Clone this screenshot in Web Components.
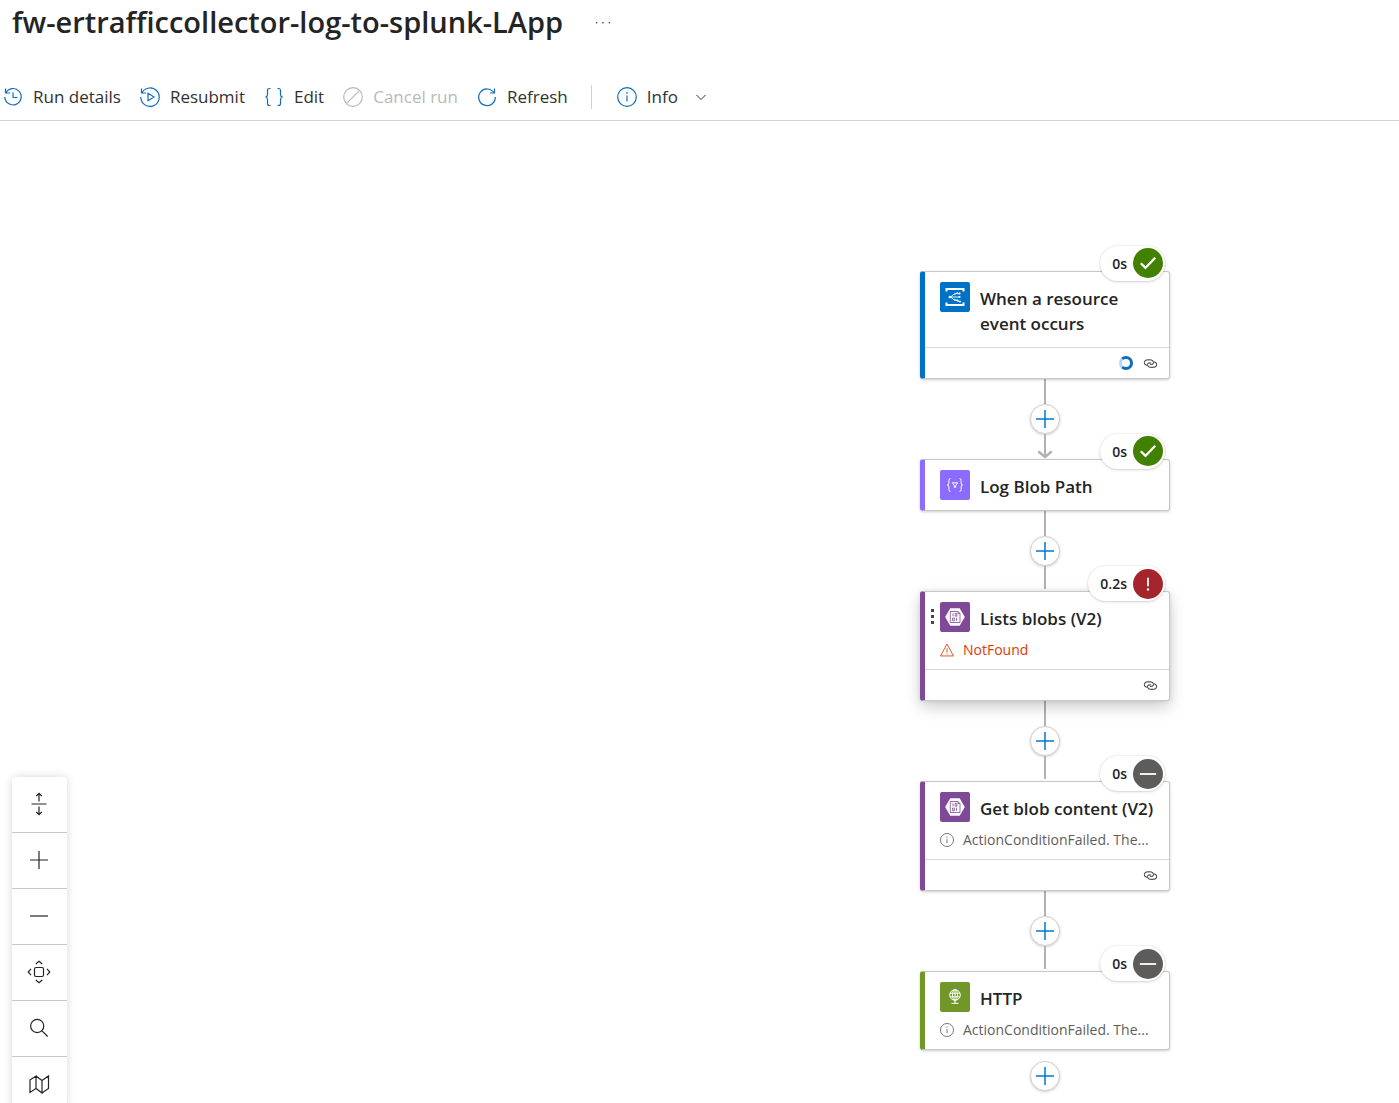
<!DOCTYPE html>
<html lang="en">
<head>
<meta charset="utf-8">
<meta name="viewport" content="width=device-width, initial-scale=1">
<title>fw-ertrafficcollector-log-to-splunk-LApp</title>
<style>
  html, body {
    height: 100%;
    margin: 0;
  }

  body {
    background: #fff;
    color: #242424;
    font-family: "Open Sans", "Noto Sans", sans-serif;
    overflow: hidden;
  }
</style>
</head>
<body>
<run-page>
  <page-title slot="header">fw-ertrafficcollector-log-to-splunk-LApp</page-title>
  <command-bar slot="header">
    <command-button icon="history">Run details</command-button>
    <command-button icon="resubmit">Resubmit</command-button>
    <command-button icon="braces">Edit</command-button>
    <command-button icon="cancel" disabled>Cancel run</command-button>
    <command-button icon="refresh">Refresh</command-button>
    <command-button icon="info" menu>Info</command-button>
  </command-bar>

  <flow-card icon="eventgrid" color="#0072c6" status="ok" time="0s" loading linked>When a resource event occurs</flow-card>
  <flow-edge arrow></flow-edge>
  <flow-card icon="compose" color="#8c6cff" status="ok" time="0s">Log Blob Path</flow-card>
  <flow-edge></flow-edge>
  <flow-card icon="blob" color="#804998" status="failed" time="0.2s" error="NotFound" linked active>Lists blobs (V2)</flow-card>
  <flow-edge></flow-edge>
  <flow-card icon="blob" color="#804998" status="skipped" time="0s" note="ActionConditionFailed. The..." linked>Get blob content (V2)</flow-card>
  <flow-edge></flow-edge>
  <flow-card icon="http" color="#709727" status="skipped" time="0s" note="ActionConditionFailed. The...">HTTP</flow-card>
  <flow-edge last></flow-edge>

  <canvas-controls slot="controls"></canvas-controls>
</run-page>

<script>
const icons = {
  history: '<path d="M2.5 1.5V6H7M2.8 5.8A8.2 8.2 0 1 1 1.8 10M10 5.5v5h4.5"/>',
  resubmit: '<path d="M1.5 1.5V6H6M2 5.6A9.2 9.2 0 1 1 .8 10M8 6.3v7.4l6-3.7z"/>',
  braces: '<path d="M6.5 1.5H5.5Q3.5 1.5 3.5 3.5V7.5Q3.5 9.5 1.5 10Q3.5 10.5 3.5 12.5V16.5Q3.5 18.5 5.5 18.5H6.5M13.5 1.5H14.5Q16.5 1.5 16.5 3.5V7.5Q16.5 9.5 18.5 10Q16.5 10.5 16.5 12.5V16.5Q16.5 18.5 14.5 18.5H13.5"/>',
  cancel: '<circle cx="10" cy="10" r="9.3"/><path d="M3.6 16.4 16.4 3.6"/>',
  refresh: '<path d="M17.5 1.5V6H13M17 5.8A8.3 8.3 0 1 0 18.3 10"/>',
  info: '<circle cx="10" cy="10" r="9.3"/><path d="M10 8.5v6M10 5v1.8"/>',
  chevron: '<path d="m1 6 9 9 9-9"/>',
  more: '<g fill="currentColor" stroke="none"><circle cx="2" cy="11" r="1"/><circle cx="10" cy="11" r="1"/><circle cx="18" cy="11" r="1"/></g>',
  plus: '<path d="M10 1v18M1 10h18"/>',
  minus: '<path d="M1 10h18"/>',
  collapse: '<path d="M2.5 10h15M10 7.5V-.5M10 12.5v8M7.3 2 10-.7 12.7 2M7.3 18l2.7 2.7 2.7-2.7"/>',
  fit: '<rect x="5.5" y="5.5" width="9" height="9" rx="1.5"/><path d="M6.8 2 10-.8 13.2 2M6.8 18l3.2 2.8 3.2-2.8M2 6.8-.8 10 2 13.2M18 6.8l2.8 3.2-2.8 3.2"/>',
  search: '<circle cx="8.2" cy="8" r="6.6"/><path d="m13 12.8 5.7 5.7"/>',
  map: '<path d="M1 6 7 2v12.5l-6 4zM7 2l6 4.5V19l-6-4.5M13 6.5 19.5 2v12.5L13 19"/>',
  link: '<path d="M4.5 12.8A4.2 4.2 0 0 1 5 4.4h5.4a4.2 4.2 0 0 1 4.2 4.2M15.5 7.4a4.2 4.2 0 0 1-.5 8.4H9.6A4.2 4.2 0 0 1 5.4 11.6M5.4 11.6Q5.4 9.2 7.6 9.2H11M14.6 8.6Q14.6 11.4 12 11.4H9.5"/>',
  warning: '<path d="M10 1.5 19.3 18.5H.7zM10 7.5v6M10 15v1.5"/>',
  ok: '<path d="m2 10.3 5.2 5.2L18 4.2" stroke-width="2.6"/>',
  failed: '<path d="M10 3v9.5" stroke-width="2"/><circle cx="10" cy="16" r="1.3" fill="currentColor" stroke="none"/>',
  skipped: '<path d="M1 10h18" stroke-width="2"/>',
  // connector glyphs, drawn for the 30px tile
  eventgrid: '<path d="M1.5 4.5V2h17v2.5M1.5 15.5V18h17v-2.5" stroke-width="2"/><path d="M5 10h9M6 9.7l3.5-3H14M6 10.3l3.5 3H12M9 8l4-3M9 12l5 2.5" stroke-width=".9"/><g fill="currentColor" stroke="none"><circle cx="4.8" cy="10" r="1.2"/><circle cx="14.5" cy="10" r="1.1"/><circle cx="14.5" cy="6.5" r="1.1"/><circle cx="12.5" cy="13.5" r="1.1"/><circle cx="15" cy="14.5" r="1"/></g>',
  compose: '<path d="M5.5 3.5Q3.9 3.5 3.9 5.5V8Q3.9 10 2.3 10Q3.9 10 3.9 12V14.5Q3.9 16.5 5.5 16.5M14.5 3.5Q16.1 3.5 16.1 5.5V8Q16.1 10 17.7 10Q16.1 10 16.1 12V14.5Q16.1 16.5 14.5 16.5M7.3 7.8h5.4L10.7 10.5V12.3H9.3V10.5z"/>',
  blob: '<path d="M5.3 1.2h9.4L19.8 10l-5.1 8.8H5.3L.2 10z" fill="currentColor" stroke="none"/><g stroke="#804998" stroke-width=".8"><path d="M5.3 4.5h7.7l2 2v9H5.3zM13 4.5v2h2"/><path d="M8 6.3v3M10.2 6.4h1.7v2.8h-1.7zM7.6 11h1.7v2.8H7.6zM11.5 10.8v3"/></g>',
  http: '<circle cx="10" cy="8" r="5.3"/><ellipse cx="10" cy="8" rx="2.4" ry="5.3"/><path d="M5 6.2h10M5 9.8h10M10 2.7V17M6.5 16.3h7"/>'
};

const makeRoot = (element, html) => {
  const template = document.createElement('template');
  template.innerHTML = html;
  element.attachShadow({ mode: 'open' });
  element.shadowRoot.appendChild(template.content.cloneNode(true));
};

class UiIcon extends HTMLElement {
  connectedCallback() {
    if (this.shadowRoot) return;
    makeRoot(this, `<style>
      :host {
        display: block;
        flex: none;
        width: 20px;
        height: 20px;
      }
      svg {
        display: block;
        width: 100%;
        height: 100%;
        overflow: visible;
        fill: none;
        stroke: currentColor;
        stroke-width: var(--stroke, 1.2);
      }
    </style>
    <svg viewBox="0 0 20 20" aria-hidden="true">${icons[this.getAttribute('name')]}</svg>`);
  }
}
customElements.define('ui-icon', UiIcon);

class RunPage extends HTMLElement {
  constructor() {
    super();
    makeRoot(this, `<style>
      :host {
        display: flex;
        flex-direction: column;
        height: 100%;
      }
      main {
        position: relative;
        flex: 1;
        min-height: 0;
        overflow: hidden;
      }
      .flow {
        display: flex;
        flex-direction: column;
        width: 250px;
        margin: 150px 229px 0 auto;
      }
    </style>
    <slot name="header"></slot>
    <main>
      <div class="flow"><slot></slot></div>
      <slot name="controls"></slot>
    </main>`);
  }
}
customElements.define('run-page', RunPage);

class PageTitle extends HTMLElement {
  constructor() {
    super();
    makeRoot(this, `<style>
      :host {
        display: flex;
        align-items: center;
        gap: 32px;
        height: 44px;
        padding: 0 12px;
      }
      h1 {
        margin: 0;
        font-size: 29px;
        font-weight: 600;
        line-height: 40px;
      }
      button {
        padding: 0;
        border: 0;
        background: none;
        color: #323130;
      }
      ui-icon {
        width: 16px;
        height: 16px;
      }
    </style>
    <h1><slot></slot></h1>
    <button aria-label="More actions"><ui-icon name="more"></ui-icon></button>`);
  }
}
customElements.define('page-title', PageTitle);

class CommandBar extends HTMLElement {
  constructor() {
    super();
    makeRoot(this, `<style>
      :host {
        display: flex;
        align-items: center;
        gap: 19px;
        height: 46px;
        padding: 30px 3px 0;
        border-bottom: 1px solid #d1d1d1;
      }
    </style>
    <slot></slot>`);
  }
}
customElements.define('command-bar', CommandBar);

class CommandButton extends HTMLElement {
  constructor() {
    super();
    const menu = this.hasAttribute('menu');
    const disabled = this.hasAttribute('disabled');
    makeRoot(this, `<style>
      :host {
        display: block;
      }
      :host([menu]) {
        margin-left: 4px;
        padding-left: 25px;
        border-left: 1px solid #d1d1d1;
      }
      button {
        display: flex;
        align-items: center;
        gap: 10px;
        height: 24px;
        padding: 0;
        border: 0;
        background: none;
        color: #323130;
        font: 500 17px/24px "Open Sans", "Noto Sans", sans-serif;
        white-space: nowrap;
      }
      button:disabled {
        color: #b9b9b9;
      }
      .icon {
        color: #0f6cbd;
      }
      button:disabled .icon {
        color: inherit;
      }
      .chevron {
        width: 10px;
        height: 10px;
        margin-left: 8px;
        --stroke: 2;
      }
    </style>
    <button${disabled ? ' disabled' : ''}>
      <ui-icon class="icon" name="${this.getAttribute('icon')}"></ui-icon>
      <slot></slot>
      ${menu ? '<ui-icon class="chevron" name="chevron"></ui-icon>' : ''}
    </button>`);
  }
}
customElements.define('command-button', CommandButton);

class StatusPill extends HTMLElement {
  connectedCallback() {
    if (this.shadowRoot) return;
    makeRoot(this, `<style>
      :host {
        display: flex;
        align-items: center;
        gap: 6px;
        height: 30px;
        padding: 3px 2px 2px 12px;
        border-radius: 18px;
        background: #fff;
        box-shadow: 0 0 2px rgba(0, 0, 0, .14), 0 1px 3px rgba(0, 0, 0, .14);
        font-size: 14px;
        font-weight: 600;
        line-height: 20px;
      }
      .dot {
        display: grid;
        place-items: center;
        width: 30px;
        height: 30px;
        border-radius: 50%;
        background: #5d5c5b;
        color: #fff;
      }
      :host([status="ok"]) .dot {
        margin-bottom: 2px;
        background: #428000;
      }
      :host([status="failed"]) .dot {
        background: #a4262c;
      }
      :host([status="ok"]) ui-icon,
      :host([status="skipped"]) ui-icon {
        width: 18px;
        height: 18px;
      }
      :host([status="failed"]) ui-icon {
        width: 18px;
        height: 18px;
      }
    </style>
    <slot></slot>
    <span class="dot"><ui-icon name="${this.getAttribute('status')}"></ui-icon></span>`);
  }
}
customElements.define('status-pill', StatusPill);

class FlowCard extends HTMLElement {
  constructor() {
    super();
    const color = this.getAttribute('color');
    const error = this.getAttribute('error');
    const note = this.getAttribute('note');
    const linked = this.hasAttribute('linked');
    const message = error || note;
    makeRoot(this, `<style>
      :host {
        display: block;
        position: relative;
        box-sizing: border-box;
        border: 1px solid #c8c8c8;
        border-left: 5px solid ${color};
        border-radius: 3px;
        background: #fff;
        box-shadow: 0 1px 3px rgba(0, 0, 0, .2);
      }
      :host([active]) {
        box-shadow: 0 6px 16px rgba(0, 0, 0, .2), 0 0 4px rgba(0, 0, 0, .1);
      }
      header {
        display: flex;
        gap: 10px;
        padding: 10px 14px 0 15px;
      }
      .tile {
        display: grid;
        flex: none;
        place-items: center;
        width: 30px;
        height: 30px;
        border-radius: 2px;
        background: ${color};
        color: #fff;
        --stroke: 1;
      }
      h2 {
        margin: 0;
        padding: 4px 0 11px;
        font-size: 17px;
        font-weight: 600;
        line-height: 25px;
      }
      .message {
        display: flex;
        align-items: center;
        gap: 9px;
        height: 16px;
        padding: 0 12px 11px 15px;
        color: ${error ? '#da3b01' : '#605e5c'};
        font-size: 14px;
        line-height: 20px;
        white-space: nowrap;
      }
      .message ui-icon {
        width: 14px;
        height: 14px;
      }
      footer {
        display: flex;
        align-items: center;
        justify-content: flex-end;
        gap: 11px;
        height: 30px;
        padding: 0 12px;
        border-top: 1px solid #d8d8d8;
      }
      footer ui-icon {
        width: 13px;
        height: 13px;
        --stroke: 1.5;
      }
      .spinner {
        box-sizing: border-box;
        width: 14px;
        height: 14px;
        border: 3px solid #0f6cbd;
        border-left-color: #b4d6fa;
        border-radius: 50%;
      }
      status-pill {
        position: absolute;
        top: -26px;
        right: 4px;
      }
      .grip {
        position: absolute;
        top: 17px;
        left: 6px;
        display: grid;
        gap: 3px;
      }
      .grip i {
        width: 3px;
        height: 3px;
        background: #484644;
      }
    </style>
    ${this.hasAttribute('active') ? '<div class="grip"><i></i><i></i><i></i></div>' : ''}
    <header>
      <div class="tile"><ui-icon name="${this.getAttribute('icon')}"></ui-icon></div>
      <h2><slot></slot></h2>
    </header>
    ${message ? `<div class="message"><ui-icon name="${error ? 'warning' : 'info'}"></ui-icon><span>${message}</span></div>` : ''}
    ${linked ? `<footer>${this.hasAttribute('loading') ? '<div class="spinner"></div>' : ''}<ui-icon name="link"></ui-icon></footer>` : ''}
    <status-pill status="${this.getAttribute('status')}">${this.getAttribute('time')}</status-pill>`);
  }
}
customElements.define('flow-card', FlowCard);

class FlowEdge extends HTMLElement {
  constructor() {
    super();
    const last = this.hasAttribute('last');
    const arrow = this.hasAttribute('arrow');
    makeRoot(this, `<style>
      :host {
        display: flex;
        flex-direction: column;
        align-items: center;
        height: 80px;
      }
      :host([last]) {
        height: auto;
        padding-top: 11px;
      }
      .line {
        width: 2px;
        background: #b1b1b7;
      }
      .start {
        height: 25px;
      }
      .end {
        flex: 1;
        margin-bottom: 2px;
      }
      button {
        display: grid;
        flex: none;
        place-items: center;
        box-sizing: border-box;
        width: 30px;
        height: 30px;
        padding: 0;
        border: 1px solid #d1d1d1;
        border-radius: 50%;
        background: #fff;
        box-shadow: 0 1px 3px rgba(0, 0, 0, .2);
        color: #0078d4;
      }
      ui-icon {
        --stroke: 1.5;
      }
      svg {
        display: block;
        flex: none;
        width: 16px;
        height: 9px;
        margin-top: -9px;
        fill: none;
        stroke: #b1b1b7;
        stroke-width: 2.5;
        stroke-linecap: round;
        stroke-linejoin: round;
      }
    </style>
    ${last ? '' : '<div class="line start"></div>'}
    <button aria-label="Insert a new step"><ui-icon name="plus"></ui-icon></button>
    ${last ? '' : '<div class="line end"></div>'}
    ${arrow ? '<svg viewBox="0 0 16 9"><path d="m2 2 6 5 6-5"/></svg>' : ''}`);
  }
}
customElements.define('flow-edge', FlowEdge);

class CanvasControls extends HTMLElement {
  constructor() {
    super();
    const actions = [
      ['collapse', 'Collapse all'],
      ['plus', 'Zoom in'],
      ['minus', 'Zoom out'],
      ['fit', 'Zoom to fit'],
      ['search', 'Search'],
      ['map', 'Toggle minimap']
    ];
    makeRoot(this, `<style>
      :host {
        position: absolute;
        bottom: -10px;
        left: 12px;
        width: 55px;
        border-radius: 4px;
        background: #fff;
        box-shadow: 0 0 8px rgba(0, 0, 0, .16);
      }
      button {
        display: grid;
        place-items: center;
        box-sizing: border-box;
        width: 100%;
        height: 56px;
        padding: 0 1px 1px 0;
        border: 0;
        border-bottom: 1px solid #c8c8c8;
        background: none;
        color: #242424;
      }
    </style>
    ${actions.map(([icon, label]) => `<button aria-label="${label}"><ui-icon name="${icon}"></ui-icon></button>`).join('')}`);
  }
}
customElements.define('canvas-controls', CanvasControls);
</script>
</body>
</html>
